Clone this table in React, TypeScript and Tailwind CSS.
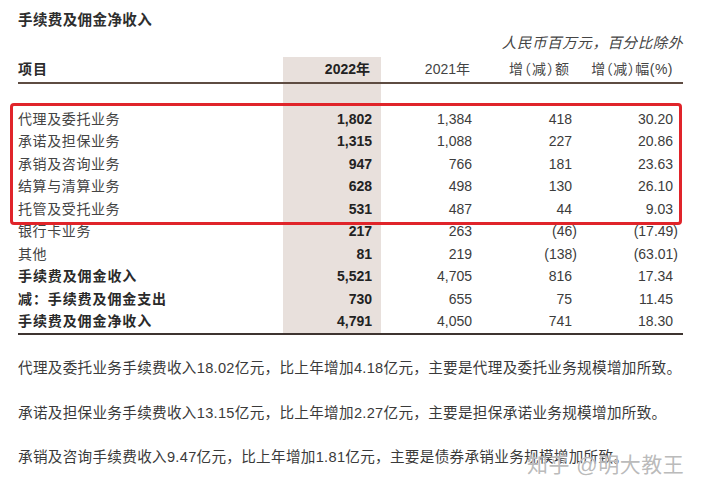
const rows = [
  { label: '代理及委托业务', y22: '1,802', y21: '1,384', amt: '418', pct: '30.20' },
  { label: '承诺及担保业务', y22: '1,315', y21: '1,088', amt: '227', pct: '20.86' },
  { label: '承销及咨询业务', y22: '947', y21: '766', amt: '181', pct: '23.63' },
  { label: '结算与清算业务', y22: '628', y21: '498', amt: '130', pct: '26.10' },
  { label: '托管及受托业务', y22: '531', y21: '487', amt: '44', pct: '9.03' },
];

const others = [
  { label: '银行卡业务', y22: '217', y21: '263', amt: '(46)', pct: '(17.49)' },
  { label: '其他', y22: '81', y21: '219', amt: '(138)', pct: '(63.01)' },
  { label: '手续费及佣金收入', y22: '5,521', y21: '4,705', amt: '816', pct: '17.34', bold: true },
  { label: '减：手续费及佣金支出', y22: '730', y21: '655', amt: '75', pct: '11.45', bold: true },
  { label: '手续费及佣金净收入', y22: '4,791', y21: '4,050', amt: '741', pct: '18.30', bold: true },
];

const notes = [
  '代理及委托业务手续费收入18.02亿元，比上年增加4.18亿元，主要是代理及委托业务规模增加所致。',
  '承诺及担保业务手续费收入13.15亿元，比上年增加2.27亿元，主要是担保承诺业务规模增加所致。',
  '承销及咨询手续费收入9.47亿元，比上年增加1.81亿元，主要是债券承销业务规模增加所致。',
];

type Row = { label: string; y22: string; y21: string; amt: string; pct: string; bold?: boolean };

// negative figures: closing paren hangs past the column edge
function Num({ v }: { v: string }) {
  if (v.endsWith(')')) {
    return <span className="-mr-[5px]">{v}</span>;
  }
  return <span>{v}</span>;
}

function TableRow({ row }: { row: Row }) {
  return (
    <div className="grid grid-cols-[265px_98px_91px_100px_111px] h-[22.5px] items-center text-[14px] text-[#3c3c3c]">
      <div
        className={
          row.bold
            ? 'font-bold text-[#2a2a2a] tracking-[0.9px]'
            : 'tracking-[0.6px] text-[#444]'
        }
      >
        {row.label}
      </div>
      <div className="h-full flex items-center justify-end pr-[9px] bg-[#e8e0dc] font-bold text-[#222]">
        {row.y22}
      </div>
      <div className="text-right">
        <Num v={row.y21} />
      </div>
      <div className="text-right">
        <Num v={row.amt} />
      </div>
      <div className="text-right pr-[10px]">
        <Num v={row.pct} />
      </div>
    </div>
  );
}

export default function App() {
  return (
    <div className="relative w-[702px] h-[500px] bg-white overflow-hidden font-['Liberation_Sans','Noto_Sans_CJK_SC',sans-serif] text-[#333]">
      <div className="pl-[18px] pr-[19px] pt-[10px]">
        <h1 className="text-[14.5px] leading-[20px] font-bold tracking-[0.4px] text-[#2e2e2e]">
          手续费及佣金净收入
        </h1>
        <div className="mt-[3px] text-right text-[14.5px] leading-[20px] italic text-[#444] tracking-[0.6px]">
          人民币百万元，百分比除外
        </div>

        {/* header */}
        <div className="mt-[4px] grid grid-cols-[265px_98px_91px_100px_111px] h-[25px] items-center text-[14px]">
          <div className="font-bold tracking-[1px] text-[#2a2a2a]">项目</div>
          <div className="h-full flex items-center justify-end pr-[11px] bg-[#e8e0dc] font-bold text-[#222]">
            2022年
          </div>
          <div className="text-right pr-[2px] text-[#444]">2021年</div>
          <div className="text-right pr-[2px] text-[#444] tracking-[1px] [font-feature-settings:'halt']">增（减）额</div>
          <div className="text-right pr-[10px] text-[#444] tracking-[0.5px] [font-feature-settings:'halt']">增（减）幅(%)</div>
        </div>
        <div className="h-[2px] bg-[#5e4c42]" />

        {/* spacer below header keeps the shaded column going */}
        <div className="grid grid-cols-[265px_98px_91px_100px_111px] h-[24px]">
          <div />
          <div className="bg-[#e8e0dc]" />
        </div>

        <div className="relative">
          {rows.map((r) => (
            <TableRow key={r.label} row={r} />
          ))}
          <div className="absolute -left-[8px] right-[1px] -top-[5px] -bottom-[4px] border-[3px] border-[#e0242a] rounded-[4px] pointer-events-none" />
        </div>
        {others.map((r) => (
          <TableRow key={r.label} row={r} />
        ))}
        <div className="h-[2px] bg-[#3e3430]" />

        <div className="mt-[22px] flex flex-col gap-[22.5px]">
          {notes.map((n) => (
            <p key={n} className="text-[14.6px] leading-[22px] tracking-[0.3px] text-[#3a3a3a] whitespace-nowrap">
              {n}
            </p>
          ))}
        </div>
      </div>

      {/* watermark */}
      <div className="absolute left-[527px] top-[451px] text-[21px] leading-[28px] text-[#a8a8a8]/80 tracking-[0.5px] [text-shadow:0_0_1px_#fff]">
        知乎 @明大教王
      </div>
    </div>
  );
}
